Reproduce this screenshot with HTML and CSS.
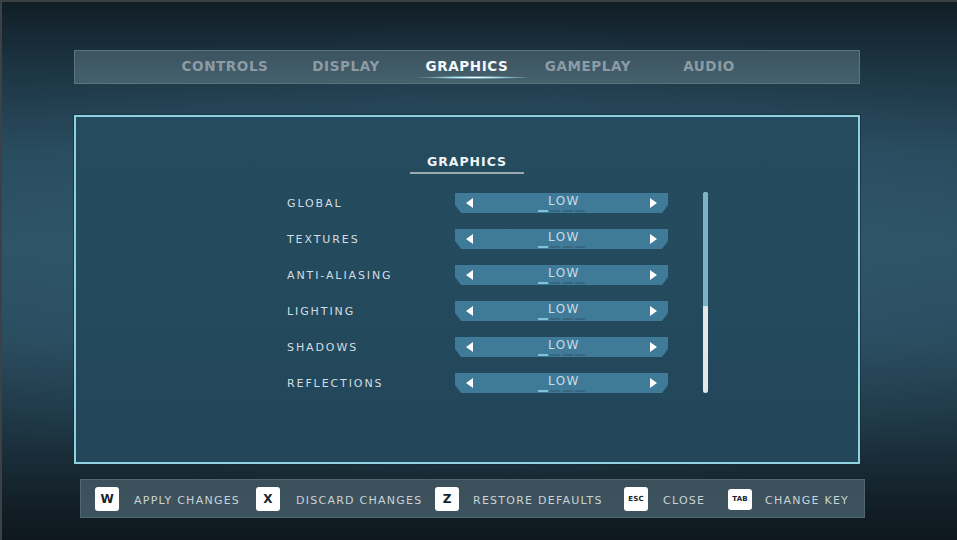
FILE: index.html
```html
<!DOCTYPE html>
<html>
<head>
<meta charset="utf-8">
<link rel="stylesheet" href="styles.css">
</head>
<body>
<div class="screen">
  <nav class="tabs">
    <div class="tab">CONTROLS</div>
    <div class="tab">DISPLAY</div>
    <div class="tab active">GRAPHICS</div>
    <div class="tab">GAMEPLAY</div>
    <div class="tab">AUDIO</div>
  </nav>

  <section class="panel">
    <h2 class="heading">GRAPHICS</h2>
    <div class="list">
      <div class="rows">
        <div class="row"><span class="label">GLOBAL</span><div class="selector"><span class="arrow left"></span><div class="value"><span>LOW</span><div class="dots"><i class="on"></i><i></i><i></i><i></i></div></div><span class="arrow right"></span></div></div>
        <div class="row"><span class="label">TEXTURES</span><div class="selector"><span class="arrow left"></span><div class="value"><span>LOW</span><div class="dots"><i class="on"></i><i></i><i></i><i></i></div></div><span class="arrow right"></span></div></div>
        <div class="row"><span class="label">ANTI-ALIASING</span><div class="selector"><span class="arrow left"></span><div class="value"><span>LOW</span><div class="dots"><i class="on"></i><i></i><i></i><i></i></div></div><span class="arrow right"></span></div></div>
        <div class="row"><span class="label">LIGHTING</span><div class="selector"><span class="arrow left"></span><div class="value"><span>LOW</span><div class="dots"><i class="on"></i><i></i><i></i><i></i></div></div><span class="arrow right"></span></div></div>
        <div class="row"><span class="label">SHADOWS</span><div class="selector"><span class="arrow left"></span><div class="value"><span>LOW</span><div class="dots"><i class="on"></i><i></i><i></i><i></i></div></div><span class="arrow right"></span></div></div>
        <div class="row"><span class="label">REFLECTIONS</span><div class="selector"><span class="arrow left"></span><div class="value"><span>LOW</span><div class="dots"><i class="on"></i><i></i><i></i><i></i></div></div><span class="arrow right"></span></div></div>
      </div>
      <div class="scrollbar"><div class="thumb"></div></div>
    </div>
  </section>

  <footer class="hints">
    <span class="key">W</span><span class="hint w1">APPLY CHANGES</span>
    <span class="key">X</span><span class="hint w2">DISCARD CHANGES</span>
    <span class="key">Z</span><span class="hint w3">RESTORE DEFAULTS</span>
    <span class="key small">ESC</span><span class="hint w4">CLOSE</span>
    <span class="key small short">TAB</span><span class="hint w5">CHANGE KEY</span>
  </footer>
</div>
</body>
</html>
```

FILE: styles.css
```css
* { box-sizing: border-box; }

html, body {
  margin: 0;
  padding: 0;
  width: 957px;
  height: 540px;
  overflow: hidden;
  background: #0f1a20;
}

.screen {
  width: 957px;
  height: 540px;
  border-top: 2px solid #3b4144;
  border-left: 2px solid #3b4144;
  padding: 48px 0 0 72px;
  font-family: "DejaVu Sans", "Liberation Sans", sans-serif;
  background:
    radial-gradient(ellipse 70% 45% at 50% 48%, rgba(52, 96, 120, 0.55), rgba(52, 96, 120, 0) 100%),
    linear-gradient(180deg, #111e26 0%, #1c3442 12%, #284a5c 28%, #2d5266 45%, #294b5d 62%, #1d3441 80%, #111d24 95%, #0e181e 100%);
}

/* ---------- Tabs ---------- */
.tabs {
  width: 786px;
  height: 34px;
  display: flex;
  justify-content: center;
  align-items: center;
  background: linear-gradient(180deg, #3c5460 0%, #45606d 100%);
  border: 1px solid #5a7581;
}

.tab {
  position: relative;
  width: 121px;
  text-align: center;
  font-size: 13.5px;
  font-weight: bold;
  letter-spacing: 0.6px;
  color: #8c9ca5;
  line-height: 16px;
  margin-top: -3px;
}

.tab.active { color: #f4f8fa; }

.tab.active::after {
  content: "";
  position: absolute;
  left: 2px;
  right: 0;
  bottom: -5px;
  height: 3px;
  border-radius: 50%;
  background: radial-gradient(ellipse 50% 50% at 55% 50%, #ffffff 0%, #a9e2f2 35%, rgba(120, 200, 230, 0) 100%);
}

/* ---------- Panel ---------- */
.panel {
  margin-top: 31px;
  width: 786px;
  height: 349px;
  border: 2px solid #8fd0e1;
  box-shadow: 0 0 0 1px rgba(20, 40, 50, 0.6);
  background: linear-gradient(180deg, #254b5f 0%, #244a5d 50%, #22465a 100%);
  display: flex;
  flex-direction: column;
  align-items: center;
  padding-top: 37px;
}

.heading {
  margin: 0;
  width: 114px;
  text-align: center;
  font-size: 12.5px;
  font-weight: bold;
  letter-spacing: 1px;
  color: #eef3f5;
  padding-bottom: 3px;
  border-bottom: 2px solid #9aa9b0;
  line-height: 15px;
}

.list {
  display: flex;
  margin-top: 11px;
  margin-left: 61px;
}

.rows {
  display: flex;
  flex-direction: column;
}

.row {
  height: 36px;
  display: flex;
  align-items: center;
}

.label {
  width: 168px;
  font-size: 11px;
  letter-spacing: 1.9px;
  color: #d4dde1;
}

.selector {
  width: 213px;
  height: 20px;
  background: #3f7b98;
  clip-path: polygon(0 0, 100% 0, 100% 60%, calc(100% - 6px) 100%, 6px 100%, 0 60%);
  display: flex;
  align-items: center;
  justify-content: space-between;
  padding: 0 11px 0 11px;
}

.arrow {
  width: 0;
  height: 0;
  border-top: 5px solid transparent;
  border-bottom: 5px solid transparent;
}

.arrow.left { border-right: 7px solid #ffffff; }
.arrow.right { border-left: 7px solid #ffffff; }

.value {
  display: flex;
  flex-direction: column;
  align-items: center;
  margin-top: 1px;
}

.value span {
  font-size: 12px;
  letter-spacing: 1.4px;
  color: #c8dbe4;
  line-height: 12px;
  padding-left: 5px;
}

.dots {
  display: flex;
  gap: 2.5px;
  margin-top: 3px;
}

.dots i {
  display: block;
  width: 10px;
  height: 2px;
  background: #37677f;
}

.dots i.on { background: #7fc2dc; }

.scrollbar {
  margin-left: 35px;
  margin-top: 7px;
  width: 5px;
  height: 201px;
  border-radius: 3px;
  background: #e4e6e7;
  overflow: hidden;
}

.thumb {
  height: 114px;
  background: #7eb2c7;
  border-radius: 3px 3px 0 0;
  box-shadow: 0 0 3px rgba(140, 210, 235, 0.7);
}

/* ---------- Bottom hints ---------- */
.hints {
  margin-top: 15px;
  margin-left: 6px;
  width: 785px;
  height: 39px;
  display: flex;
  align-items: center;
  padding-left: 14px;
  padding-top: 1px;
  background: linear-gradient(180deg, #3b505b 0%, #3d535e 100%);
  border: 1px solid #506772;
}

.key {
  width: 24px;
  height: 24px;
  border-radius: 3px;
  background: #ffffff;
  color: #17242c;
  font-size: 12px;
  font-weight: bold;
  display: flex;
  align-items: center;
  justify-content: center;
  flex-shrink: 0;
}

.key.small { font-size: 7px; letter-spacing: 0.2px; }
.key.short { height: 21px; }

.hint {
  flex: none;
  font-size: 11px;
  letter-spacing: 1.25px;
  color: #c9d3d8;
  white-space: nowrap;
  padding-top: 2px;
}

.w1 { margin-left: 15px; width: 122px; }
.w2 { margin-left: 16px; width: 139px; }
.w3 { margin-left: 14px; width: 151px; }
.w4 { margin-left: 15px; width: 65px; }
.w5 { margin-left: 13px; }
```
